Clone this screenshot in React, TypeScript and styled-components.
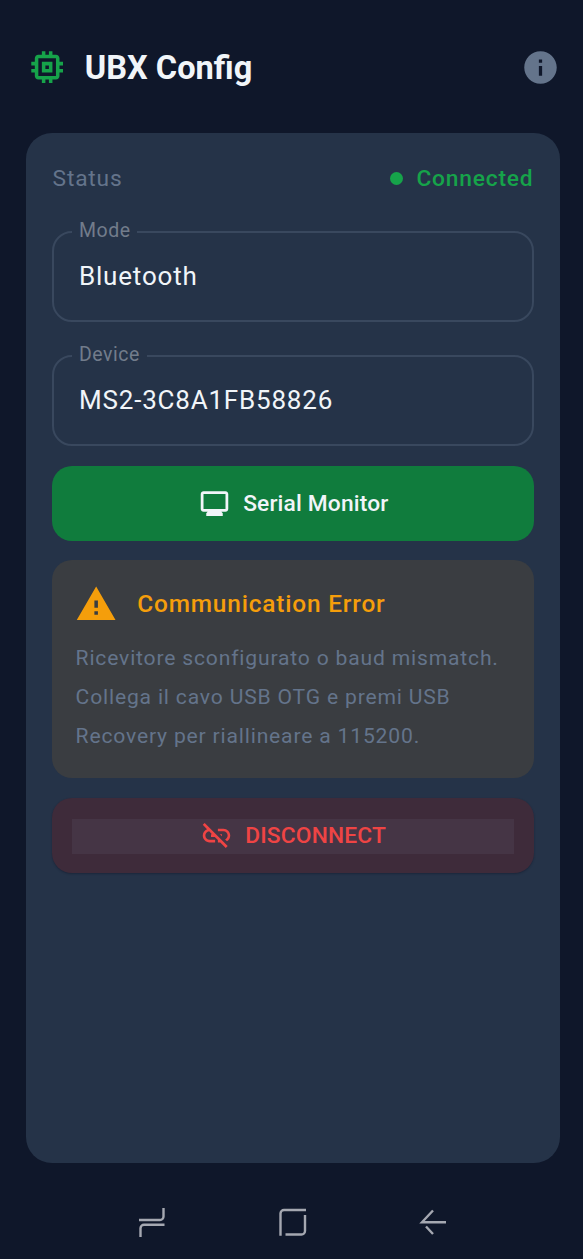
import React from "react";
import styled, { createGlobalStyle } from "styled-components";

const GlobalStyle = createGlobalStyle`
  *, *::before, *::after { box-sizing: border-box; }
  body {
    margin: 0;
    background: #0f172a;
    font-family: Roboto, "Liberation Sans", sans-serif;
    -webkit-font-smoothing: antialiased;
  }
`;

const Screen = styled.div`
  width: 583px;
  height: 1259px;
  display: flex;
  flex-direction: column;
  background: #0f172a;
  overflow: hidden;
`;

const Header = styled.header`
  display: flex;
  align-items: center;
  height: 133px;
  padding: 2px 23px 0 26px;
`;

const Title = styled.h1`
  flex: 1;
  margin: 1px 0 0 16.5px;
  font-size: 32.6px;
  line-height: 40px;
  font-weight: 700;
  color: #f1f5f9;
`;

const Glyph = styled.svg<{ $size: number; $color: string }>`
  display: block;
  flex: none;
  width: ${(p) => p.$size}px;
  height: ${(p) => p.$size}px;
  fill: ${(p) => p.$color};
`;

const Card = styled.main`
  flex: none;
  margin: 0 23px 0 26px;
  height: 1030px;
  padding: 26px;
  border-radius: 26px;
  background: #253348;
`;

const StatusRow = styled.div`
  display: flex;
  align-items: center;
  justify-content: space-between;
  height: 39px;
  padding: 0 0.6px;
  font-size: 22.75px;
  letter-spacing: 0.8px;
  color: #64748b;
`;

const StatusValue = styled.span`
  display: flex;
  align-items: center;
  gap: 13px;
  font-weight: 500;
  color: #16a34a;
`;

const Dot = styled.i`
  width: 13.6px;
  height: 13.6px;
  border-radius: 50%;
  background: #16a34a;
`;

const Field = styled.fieldset<{ $gap: number }>`
  display: flex;
  align-items: center;
  margin: ${(p) => p.$gap}px 0 0;
  min-width: 0;
  height: 102px;
  padding: 0 25px;
  border: 2px solid #39485e;
  border-radius: 20px;
`;

const Legend = styled.legend`
  height: 23px;
  margin-left: -7px;
  padding: 0 7px;
  font-size: 19.5px;
  line-height: 22px;
  letter-spacing: 0.5px;
  color: #727c8b;
`;

const FieldValue = styled.div`
  height: 78px;
  line-height: 67px;
  font-size: 26px;
  letter-spacing: 0.8px;
  color: #f1f5f9;
`;

const SerialButton = styled.button`
  display: flex;
  align-items: center;
  justify-content: center;
  gap: 12.6px;
  width: 100%;
  height: 75px;
  margin-top: 19.5px;
  padding: 0.6px 0 0;
  border: 0;
  border-radius: 20px;
  background: #107c3d;
  color: #f1f5f9;
  font: 500 22.75px Roboto, sans-serif;
  letter-spacing: 0.16px;
`;

const Alert = styled.section`
  height: 218.4px;
  margin-top: 19.5px;
  padding: 22.3px 23.6px 22.3px 23px;
  border-radius: 20px;
  background: #3a3d41;
`;

const AlertHead = styled.div`
  display: flex;
  align-items: center;
  gap: 20px;
  height: 43px;
  font-size: 24.4px;
  font-weight: 500;
  letter-spacing: 0.83px;
  color: #f59e0b;
`;

const AlertText = styled.p`
  margin: 12.4px 0 0 0.6px;
  font-size: 21.1px;
  line-height: 39px;
  letter-spacing: 0.82px;
  white-space: nowrap;
  color: #64748b;
`;

const DisconnectButton = styled.button`
  display: flex;
  width: 100%;
  height: 75px;
  margin-top: 19.8px;
  padding: 20.5px 20px 19px;
  border: 0;
  border-radius: 20px;
  background: #3e2b3a;
  box-shadow: 0 1px 2px rgba(15, 23, 42, 0.45);
`;

const DisconnectLabel = styled.span`
  display: flex;
  flex: 1;
  align-items: center;
  justify-content: center;
  gap: 12.6px;
  height: 35.5px;
  padding: 0 0.4px 2px 0;
  background: #453545;
  color: #ef4444;
  font: 500 22.75px Roboto, sans-serif;
  letter-spacing: 0.16px;
`;

const NavBar = styled.nav`
  display: flex;
  justify-content: space-between;
  padding: 43px 134px 0 136px;
`;

const NavIcon = styled.svg`
  width: 32px;
  height: 32px;
  fill: none;
  stroke: #a5a8b1;
  stroke-width: 2.4;
`;

const paths = {
  chip: "M15 9H9v6h6V9zm-2 4h-2v-2h2v2zm8-2V9h-2V7c0-1.1-.9-2-2-2h-2V3h-2v2h-2V3H9v2H7c-1.1 0-2 .9-2 2v2H3v2h2v2H3v2h2v2c0 1.1.9 2 2 2h2v2h2v-2h2v2h2v-2h2c1.1 0 2-.9 2-2v-2h2v-2h-2v-2h2zm-4 6H7V7h10v10z",
  info: "M12 2C6.48 2 2 6.48 2 12s4.48 10 10 10 10-4.48 10-10S17.52 2 12 2zm1 15h-2v-6h2v6zm0-8h-2V7h2v2z",
  monitor: "M20 3H4c-1.1 0-2 .9-2 2v11c0 1.1.9 2 2 2h3l-1 1v2h12v-2l-1-1h3c1.1 0 2-.9 2-2V5c0-1.1-.9-2-2-2zm0 13H4V5h16v11z",
  warning: "M1 21h22L12 2 1 21zm12-3h-2v-2h2v2zm0-4h-2v-4h2v4z",
  linkOff: "M14.39 11L16 12.61V11zM17 7h-4v1.9h4c1.71 0 3.1 1.39 3.1 3.1 0 1.27-.77 2.37-1.87 2.84l1.4 1.4C21.05 15.36 22 13.79 22 12c0-2.76-2.24-5-5-5zM2 4.27l3.11 3.11C3.29 8.12 2 9.91 2 12c0 2.76 2.24 5 5 5h4v-1.9H7c-1.71 0-3.1-1.39-3.1-3.1 0-1.59 1.21-2.9 2.76-3.07L8.73 11H8v2h2.73L13 15.27V17h1.73l4.01 4 1.41-1.41L3.41 2.86 2 4.27z",
};

function Icon({ name, size, color }: { name: keyof typeof paths; size: number; color: string }) {
  return (
    <Glyph viewBox="0 0 24 24" $size={size} $color={color} aria-hidden>
      <path d={paths[name]} />
    </Glyph>
  );
}

function OutlinedField({ label, value, gap }: { label: string; value: string; gap: number }) {
  return (
    <Field $gap={gap}>
      <Legend>{label}</Legend>
      <FieldValue>{value}</FieldValue>
    </Field>
  );
}

export default function App() {
  return (
    <Screen>
      <GlobalStyle />
      <Header>
        <Icon name="chip" size={42.3} color="#16a34a" />
        <Title>UBX Config</Title>
        <Icon name="info" size={39} color="#64748b" />
      </Header>
      <Card>
        <StatusRow>
          <span>Status</span>
          <StatusValue>
            <Dot />
            Connected
          </StatusValue>
        </StatusRow>
        <OutlinedField label="Mode" value="Bluetooth" gap={22} />
        <OutlinedField label="Device" value="MS2-3C8A1FB58826" gap={22} />
        <SerialButton>
          <Icon name="monitor" size={33} color="#f1f5f9" />
          Serial Monitor
        </SerialButton>
        <Alert>
          <AlertHead>
            <Icon name="warning" size={42.3} color="#f59e0b" />
            Communication Error
          </AlertHead>
          <AlertText>
            Ricevitore sconfigurato o baud mismatch.
            <br />
            Collega il cavo USB OTG e premi USB
            <br />
            Recovery per riallineare a 115200.
          </AlertText>
        </Alert>
        <DisconnectButton>
          <DisconnectLabel>
            <Icon name="linkOff" size={33} color="#ef4444" />
            DISCONNECT
          </DisconnectLabel>
        </DisconnectButton>
      </Card>
      <NavBar>
        <NavIcon viewBox="0 0 32 32">
          <path d="M3 14H24a3.5 3.5 0 0 0 3.5-3.5V2M28.5 18.7H8a3.5 3.5 0 0 0-3.5 3.5V31" />
        </NavIcon>
        <NavIcon viewBox="0 0 32 32">
          <path d="M29 4H7a3.5 3.5 0 0 0-3.5 3.5V29.7M8.5 28.5H24.5a3.5 3.5 0 0 0 3.5-3.5V9" />
        </NavIcon>
        <NavIcon viewBox="0 0 32 32">
          <path d="M29 16.3H5L16 4.5M9 20.5L16 28" />
        </NavIcon>
      </NavBar>
    </Screen>
  );
}
